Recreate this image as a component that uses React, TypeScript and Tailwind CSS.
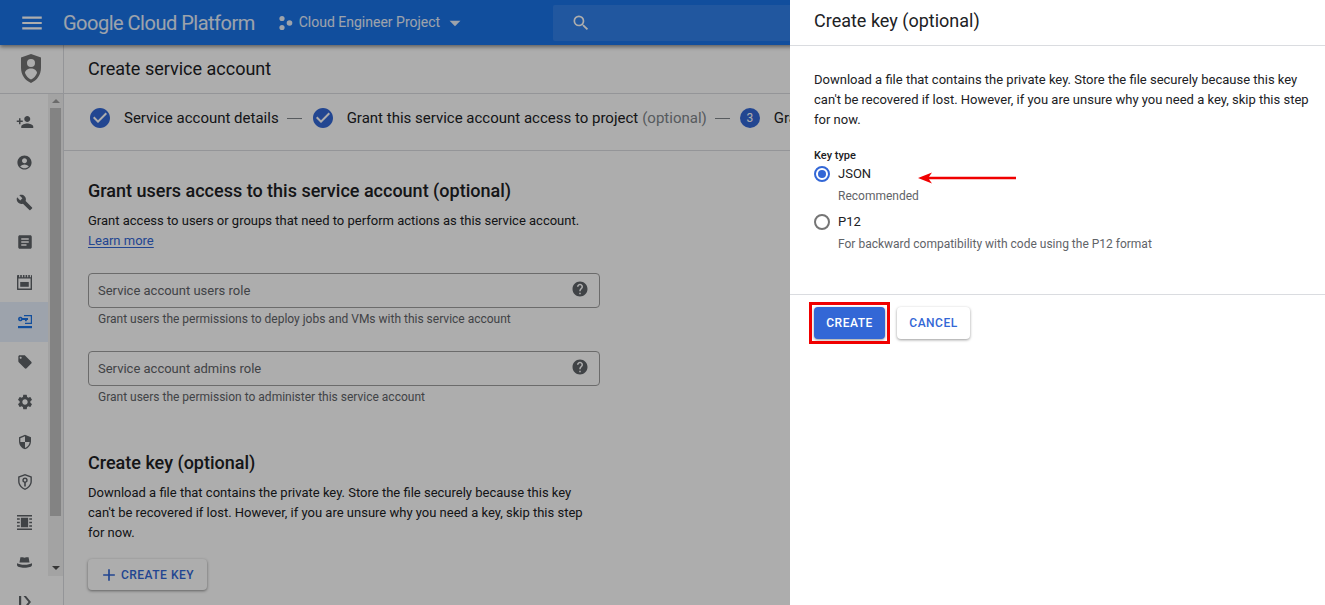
import React from 'react';
import { MdMenu, MdSearch, MdArrowDropDown, MdPersonAdd, MdAccountCircle, MdBuild, MdArticle, MdLocalOffer, MdSettings, MdSecurity, MdHelp, MdAdd, MdCheckCircle } from 'react-icons/md';

const font = { fontFamily: 'Roboto, sans-serif' };

const KeyBar = () => (
    <svg width="14" height="14" viewBox="0 0 14 14" fill="currentColor">
        <path fillRule="evenodd" d="M0 4a2.400 2.400 0 0 1 4.500-1.100H10v2.200H8.800v1.200H7V5.100H4.500A2.400 2.400 0 0 1 0 4zm1.600 0a.8.8 0 1 0 1.600 0 .8.8 0 0 0-1.600 0z" />
        <path d="M6 0h8v9H7V7.800h5.800V1.200H6z" />
        <rect x="0" y="11" width="14" height="2.200" />
    </svg>
);

const SimCard = () => (
    <svg width="15" height="15" viewBox="0 0 14 14" fill="currentColor">
        <path fillRule="evenodd" d="M.8 0H2v2h1V0h1.500v2h1V0H7v2h1V0h1.500v2h1V0h1.500v2h1V0h.2a.8.8 0 0 1 .8.8v12.400a.8.8 0 0 1-.8.8H.8a.8.8 0 0 1-.8-.8V.8A.8.8 0 0 1 .8 0zm.5 3.200v9.500h11.400V3.200z" />
        <rect x="3" y="6.500" width="8" height="4.500" />
    </svg>
);

const ShieldKey = () => (
    <svg width="14" height="16" viewBox="0 0 12 14" fill="currentColor">
        <path fillRule="evenodd" d="M6 0l6 2.200v4.200c0 3.400-2.500 6.400-6 7.600-3.500-1.200-6-4.200-6-7.600V2.200zM6 1.400L1.200 3.100v3.300c0 2.700 2 5.200 4.800 6.300 2.800-1.100 4.800-3.600 4.800-6.300V3.100z" />
        <path fillRule="evenodd" d="M6 3a2.400 2.400 0 0 1 .7 4.700V11H5.300V7.700A2.400 2.400 0 0 1 6 3zm0 1.300a1.100 1.100 0 1 0 0 2.200 1.100 1.100 0 0 0 0-2.200z" />
    </svg>
);

const FilmStrip = () => (
    <svg width="15" height="15" viewBox="0 0 14 14" fill="currentColor">
        <path d="M0 0h14v1.400H0zM0 12.600h14V14H0zM0 3h2.600v1.400H0zM11.400 3H14v1.400h-2.600zM0 6.300h2.600v1.400H0zM11.400 6.300H14v1.400h-2.600zM0 9.600h2.600V11H0zM11.400 9.600H14V11h-2.600zM3.600 2.600h6.800v8.800H3.600z" />
    </svg>
);

const Hat = () => (
    <svg width="15" height="13" viewBox="0 0 14 12" fill="currentColor">
        <path d="M3.200 1h2.200L7 1.600 8.600 1h2.200l.9 5H2.300z" />
        <path d="M0 6.800c1.500.8 4 1.400 7 1.400s5.500-.6 7-1.400v1.600C14 10 11 11 7 11S0 10 0 8.400z" />
    </svg>
);

const Bracket = () => (
    <svg width="14" height="14" viewBox="0 0 14 14" fill="currentColor">
        <path d="M1 1h2.200v12H1zM5.500 1l5 6-5 6H8l5-6-5-6z" />
    </svg>
);

const railIcons: { key: string; node: React.ReactNode; active?: boolean }[] = [
    { key: 'iam', node: <MdPersonAdd size={18} /> },
    { key: 'identity', node: <MdAccountCircle size={17} /> },
    { key: 'tools', node: <MdBuild size={17} /> },
    { key: 'audit', node: <MdArticle size={18} /> },
    { key: 'quotas', node: <SimCard /> },
    { key: 'accounts', node: <KeyBar />, active: true },
    { key: 'labels', node: <MdLocalOffer size={16} /> },
    { key: 'settings', node: <MdSettings size={18} /> },
    { key: 'privacy', node: <MdSecurity size={16} /> },
    { key: 'crypto', node: <ShieldKey /> },
    { key: 'groups', node: <FilmStrip /> },
    { key: 'hat', node: <Hat /> },
    { key: 'more', node: <Bracket /> },
];

const StepDash = () => <span className="mx-[8px] w-[15px] h-px bg-[#80868b] shrink-0" />;

const RoleField = ({ label, hint }: { label: string; hint: string }) => (
    <div>
        <div className="h-[35px] border border-[#9e9e9e] rounded-[4px] flex items-center justify-between pl-[9px] pr-[10px]">
            <span className="text-[13px] text-[#5f6368]">{label}</span>
            <MdHelp size={18} className="text-[#5f6368] -mt-[3px]" />
        </div>
        <p className="text-[12px] leading-[16px] text-[#5f6368] pl-[10px] mt-[3px]">{hint}</p>
    </div>
);

const App: React.FC = () => {
    return (
        <div className="relative w-[1325px] h-[605px] overflow-hidden bg-white text-[#202124]" style={font}>
            <header className="relative z-10 h-[45px] bg-[#1a73e8] flex items-center text-white shadow-[0_2px_4px_rgba(0,0,0,0.45)]">
                <div className="w-[63px] flex justify-center"><MdMenu size={26} /></div>
                <span className="text-[20px] text-white/90 tracking-[-0.5px]">Google Cloud Platform</span>
                <div className="ml-[24px] flex items-center text-[14px] text-white/90">
                    <svg width="14" height="16" viewBox="0 0 14 16" fill="currentColor" className="mr-[6px]">
                        <circle cx="3" cy="3.500" r="2.600" /><circle cx="10.500" cy="8" r="2.800" /><circle cx="3" cy="12.500" r="2.600" />
                    </svg>
                    Cloud Engineer Project
                    <MdArrowDropDown size={26} className="ml-[2px]" />
                </div>
                <div className="ml-[85px] h-[36px] w-[600px] bg-white/10 rounded-[2px] flex items-center pl-[18px]">
                    <MdSearch size={20} />
                </div>
            </header>

            <div className="flex h-[560px]">
                <aside className="w-[64px] shrink-0 border-r border-[#dadce0] flex flex-col">
                    <div className="h-[49px] shrink-0 border-b border-[#dadce0] flex justify-center items-center pr-[1px] pb-[2px]">
                        <svg width="20" height="29" viewBox="0 0 20 29" fill="#757575">
                            <path fillRule="evenodd" d="M10 0l10 3.600v10C20 21 16 26.500 10 29 4 26.500 0 21 0 13.600v-10zM10 5a4 4 0 1 0 0 8 4 4 0 0 0 0-8zm0 9.500c-3 0-6 1.800-6 4.500 1 3 3.500 5.300 6 6.500 2.500-1.200 5-3.500 6-6.500 0-2.700-3-4.500-6-4.500z" />
                        </svg>
                    </div>
                    <div className="flex flex-1 min-h-0">
                        <div className="flex-1 overflow-hidden pt-[8px]">
                            {railIcons.map((it) => (
                                <div key={it.key} className={`h-[40px] flex items-center justify-center pl-[1px] ${it.active ? 'bg-[#e8f0fe] text-[#1a73e8]' : 'text-[#5f6368]'}`}>
                                    {it.node}
                                </div>
                            ))}
                        </div>
                        <div className="w-[15px] shrink-0 h-[482px] bg-[#f1f1f1] flex flex-col items-center relative">
                            <div className="h-[14px] flex items-center justify-center">
                                <div className="w-0 h-0 border-x-[4px] border-x-transparent border-b-[4px] border-b-[#9e9e9e]" />
                            </div>
                            <div className="w-[11px] h-[408px] bg-[#c1c1c1]" />
                            <div className="absolute bottom-[6px] w-0 h-0 border-x-[4px] border-x-transparent border-t-[4px] border-t-[#505050]" />
                        </div>
                    </div>
                </aside>

                <main className="flex-1 min-w-0">
                    <div className="h-[49px] border-b border-[#dadce0] flex items-center pl-[24px] text-[18px] pb-[2px]">Create service account</div>
                    <div className="h-[57px] w-[726px] border-b border-[#dadce0] flex items-center pl-[25px] text-[15px] whitespace-nowrap overflow-hidden pb-[8px]">
                        <MdCheckCircle size={24} className="text-[#3367d6] -ml-[1px] shrink-0" />
                        <span className="ml-[12px]">Service account details</span>
                        <span className="ml-[8px] mr-[9px] w-[15px] h-px bg-[#80868b] shrink-0" />
                        <MdCheckCircle size={24} className="text-[#3367d6] shrink-0" />
                        <span className="ml-[12px]">Grant this service account access to project</span>
                        <span className="ml-[4px] text-[#80868b]">(optional)</span>
                        <StepDash />
                        <span className="w-[20px] h-[20px] shrink-0 ml-[2px] mr-[3px] rounded-full bg-[#3367d6] text-white text-[12px] flex items-center justify-center">3</span>
                        <span className="ml-[11px]">Grant users access to this service account (optional)</span>
                    </div>
                    <section className="pl-[24px] w-[536px]">
                        <h2 className="text-[18px] leading-[24px] font-medium mt-[28px]">Grant users access to this service account (optional)</h2>
                        <p className="text-[13px] leading-[20px] mt-[8px]">Grant access to users or groups that need to perform actions as this service account.</p>
                        <a className="block w-fit text-[13px] leading-[20px] text-[#3367d6] underline underline-offset-2 decoration-[#3367d6]">Learn more</a>
                        <div className="mt-[22px] flex flex-col gap-[24px]">
                            <RoleField label="Service account users role" hint="Grant users the permissions to deploy jobs and VMs with this service account" />
                            <RoleField label="Service account admins role" hint="Grant users the permission to administer this service account" />
                        </div>
                        <h2 className="text-[18px] leading-[24px] font-medium mt-[46px]">Create key (optional)</h2>
                        <p className="text-[13px] leading-[20px] mt-[8px]">Download a file that contains the private key. Store the file securely because this key can't be recovered if lost. However, if you are unsure why you need a key, skip this step for now.</p>
                        <button className="mt-[16px] h-[31px] w-[119px] rounded-[4px] bg-white shadow-[0_1px_3px_rgba(0,0,0,0.45)] flex items-center justify-center text-[#3367d6] text-[12px] font-medium tracking-[0.5px]">
                            <MdAdd size={20} className="mr-[2px] -ml-[2px]" />CREATE KEY
                        </button>
                    </section>
                </main>
            </div>

            <div className="absolute inset-0 z-20 bg-black/[0.32]" />

            <aside className="absolute z-30 top-0 right-0 bottom-0 w-[535px] bg-white">
                <div className="h-[46px] border-b border-[#dadce0] flex items-center pl-[24px] text-[18px] pb-[4px]">Create key (optional)</div>
                <div className="pl-[24px] pr-[12px] pt-[24px] h-[249px] border-b border-[#dadce0]">
                    <p className="text-[13px] leading-[20px]">Download a file that contains the private key. Store the file securely because this key can't be recovered if lost. However, if you are unsure why you need a key, skip this step for now.</p>
                    <div className="relative mt-[20px]">
                        <div className="text-[11px] leading-[12px] font-medium">Key type</div>
                        <div className="flex items-center h-[20px] mt-[2px]">
                            <span className="w-[16px] h-[16px] rounded-full border-2 border-[#3367d6] flex items-center justify-center">
                                <span className="w-[8px] h-[8px] rounded-full bg-[#3367d6]" />
                            </span>
                            <span className="ml-[8px] text-[13px]">JSON</span>
                        </div>
                        <div className="ml-[24px] mt-[2px] text-[12px] leading-[20px] text-[#5f6368]">Recommended</div>
                        <div className="flex items-center h-[20px] mt-[6px]">
                            <span className="w-[16px] h-[16px] rounded-full border-2 border-[#757575]" />
                            <span className="ml-[8px] text-[13px]">P12</span>
                        </div>
                        <div className="ml-[24px] mt-[2px] text-[12px] leading-[20px] text-[#5f6368]">For backward compatibility with code using the P12 format</div>
                        <svg width="100" height="14" viewBox="0 0 100 14" className="absolute left-[104px] top-[21px]">
                            <path d="M0 7L14 1.500 11 5.800h87v2.400H11L14 12.500z" fill="#f00000" />
                        </svg>
                    </div>
                </div>
                <div className="flex items-center pl-[24px] pt-[12px] gap-[12px]">
                    <div className="relative">
                        <button className="w-[71px] h-[32px] rounded-[4px] bg-[#3367d6] text-white text-[12px] font-medium tracking-[0.5px] shadow-[0_1px_3px_rgba(0,0,0,0.4)]">CREATE</button>
                        <div className="absolute -inset-x-[5px] -inset-y-[5px] border-[3px] border-[#f00000]" />
                    </div>
                    <button className="w-[73px] h-[32px] rounded-[4px] bg-white text-[#3367d6] text-[12px] font-medium tracking-[0.5px] shadow-[0_1px_3px_rgba(0,0,0,0.4)]">CANCEL</button>
                </div>
            </aside>
        </div>
    );
};

export default App;
